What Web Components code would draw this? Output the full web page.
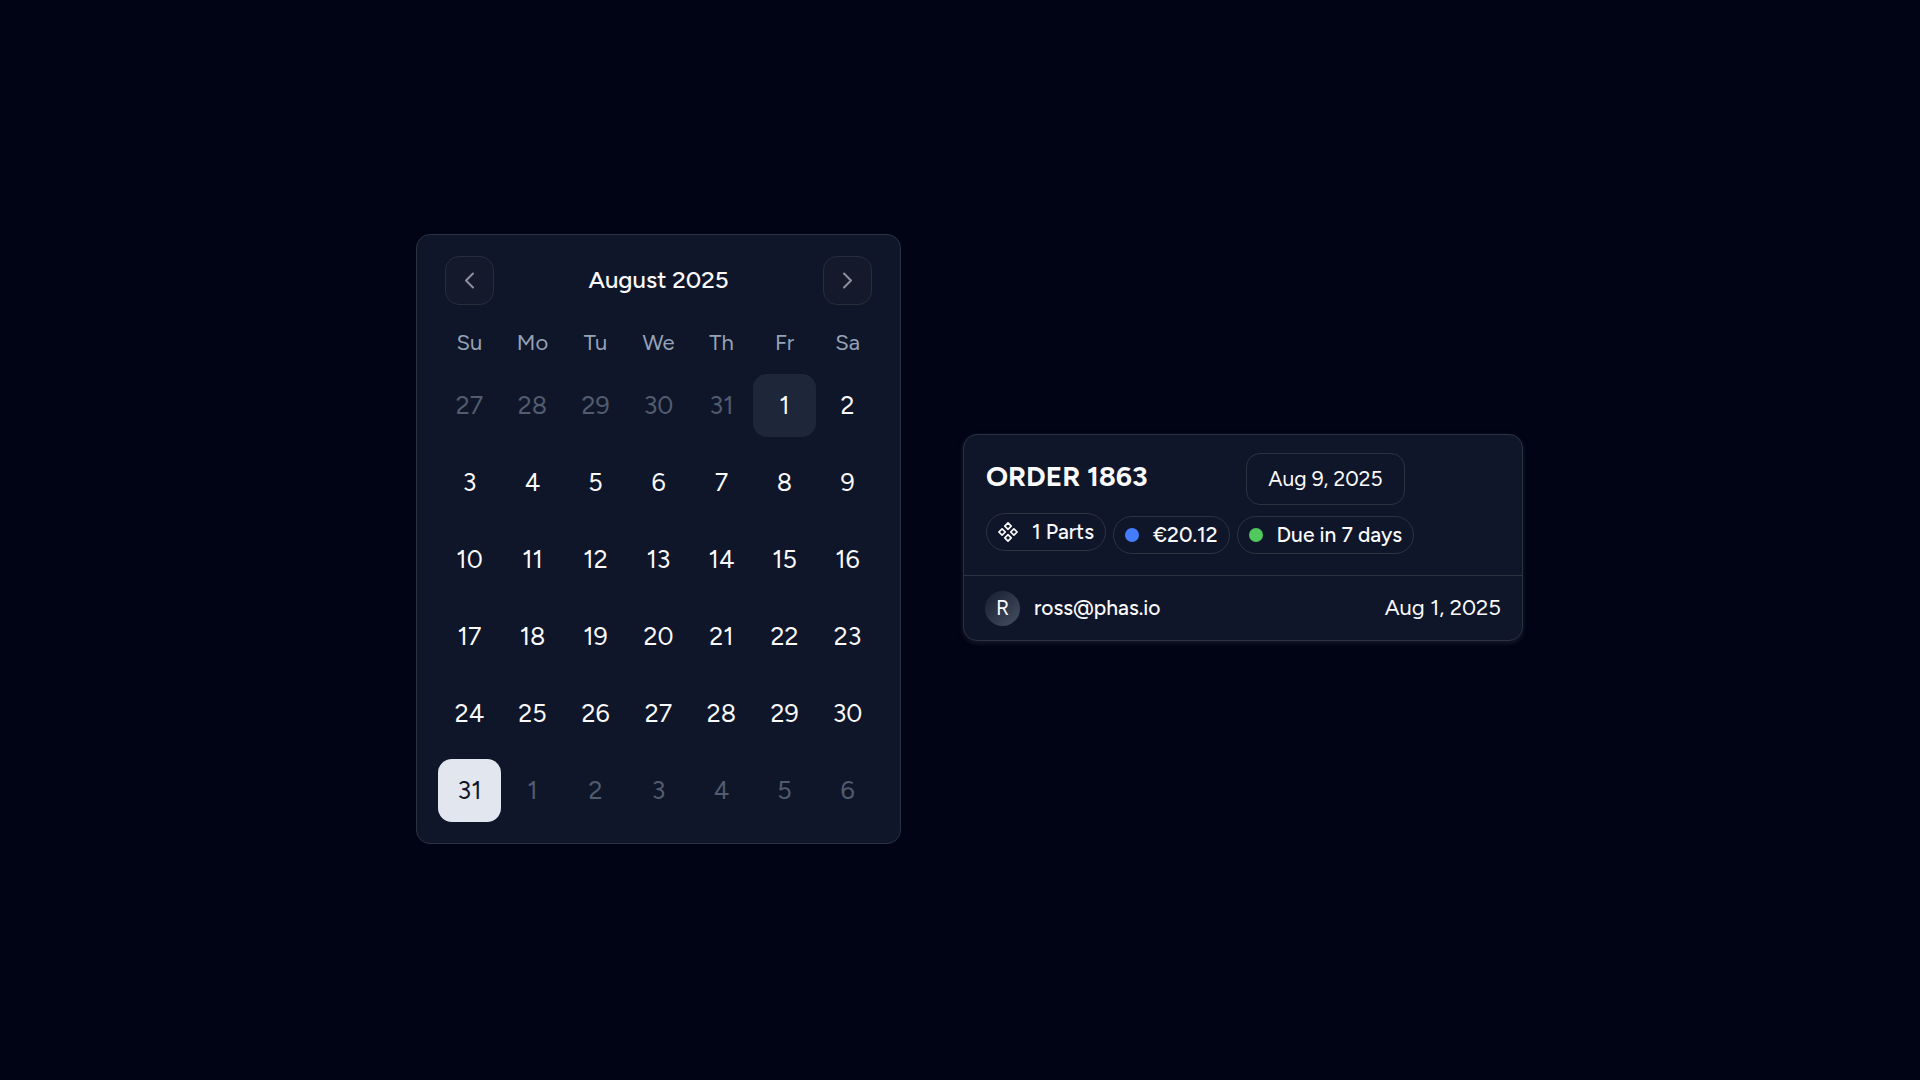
<!DOCTYPE html>
<html lang="en">
<head>
<meta charset="utf-8">
<title>Order planner</title>
<style>
  html { background: #010415; }
  body {
    margin: 0;
    min-height: 100vh;
    color: #fafafc;
    font-family: Figtree, Lato, "Liberation Sans", sans-serif;
    font-size: 22px;
    --card: #101629;
    --line: #2d3241;
    --muted: #94a3b8;
  }
</style>
</head>
<body>
<planner-page>
  <month-calendar month="August 2025"></month-calendar>
  <order-card>
    <span slot="title">ORDER 1863</span>
    <span slot="due">Aug 9, 2025</span>
    <info-chip slot="parts">
      <svg slot="icon" width="20" height="20" viewBox="0 0 20 20" fill="none" stroke="currentColor" stroke-width="1.7" stroke-linejoin="round" aria-hidden="true">
        <path d="M10 .9 13.200 4.100 10 7.300 6.800 4.100ZM4.100 6.800 7.300 10 4.100 13.200 .9 10ZM15.900 6.800 19.100 10 15.900 13.200 12.700 10ZM10 12.700 13.200 15.900 10 19.100 6.800 15.900Z"/>
      </svg>1 Parts</info-chip>
    <info-chip slot="price" dot="blue">€20.12</info-chip>
    <info-chip slot="status" dot="green">Due in 7 days</info-chip>
    <user-tag slot="owner" initial="R">ross@phas.io</user-tag>
    <time slot="created" datetime="2025-08-01">Aug 1, 2025</time>
  </order-card>
</planner-page>

<template id="page-tpl">
  <style>
    :host { display: flex; align-items: center; justify-content: center; gap: 62px; min-height: 100vh; box-sizing: border-box; padding: 0 0 3px 19px; }
    ::slotted(order-card) { flex: 0 1 560px; margin-bottom: 3px; }
  </style>
  <slot></slot>
</template>

<template id="calendar-tpl">
  <style>
    :host { display: block; box-sizing: border-box; padding: 21px; background: var(--card); border: 1px solid var(--line); border-radius: 14px; }
    header { display: flex; align-items: center; justify-content: space-between; padding: 0 7px; margin-bottom: 22px; }
    h2 { margin: 0; font-size: 24px; line-height: 32px; font-weight: 500; }
    table { border-collapse: collapse; }
    th { padding: 0; width: 63px; height: 33px; font-size: 22px; line-height: 32px; font-weight: 400; color: var(--muted); }
    td { padding: 14px 0 0; }
  </style>
  <header>
    <nav-button label="Previous month"></nav-button>
    <h2></h2>
    <nav-button label="Next month"></nav-button>
  </header>
  <table>
    <thead><tr></tr></thead>
    <tbody></tbody>
  </table>
</template>

<template id="nav-tpl">
  <style>
    :host { display: block; }
    button { display: grid; place-items: center; box-sizing: border-box; width: 49px; height: 49px; padding: 0; color: #8e919c; background: #14192b; border: 1px solid #282d3c; border-radius: 14px; }
    svg { display: block; }
  </style>
  <button type="button">
    <svg width="21" height="21" viewBox="0 0 21 21" fill="none" stroke="currentColor" stroke-width="2" stroke-linecap="round" stroke-linejoin="round" aria-hidden="true"><path/></svg>
  </button>
</template>

<template id="day-tpl">
  <style>
    :host { display: block; }
    button { display: block; width: 63px; height: 63px; padding: 0; border: 0; border-radius: 14px; background: none; color: inherit; font: inherit; font-size: 25px; line-height: 32px; text-align: center; }
    :host([state="outside"]) button { color: #525c70; }
    :host([state="today"]) button { background: #1e2739; }
    :host([state="selected"]) button { background: #e2e6ef; color: #101628; }
  </style>
  <button type="button"><slot></slot></button>
</template>

<template id="order-tpl">
  <style>
    :host { display: block; box-sizing: border-box; background: var(--card); border: 1px solid var(--line); border-radius: 14px; box-shadow: 0 2px 5px #2d324180; }
    .body { display: grid; grid-template-columns: auto auto auto; justify-content: start; column-gap: 7px; row-gap: 8px; padding: 18px 22px 21px; }
    h3 { grid-column: span 2; margin: 0; padding-top: 5px; font-size: 28px; line-height: 36px; font-weight: 700; }
    .date { justify-self: center; box-sizing: border-box; height: 52px; padding: 0 21px; border: 1px solid var(--line); border-radius: 14px; background: none; color: inherit; font: inherit; font-size: 21px; line-height: 28px; }
    .lower { align-self: end; padding-top: 3px; }
    footer { display: flex; align-items: center; justify-content: space-between; padding: 15px 21px 14px; border-top: 1px solid var(--line); line-height: 28px; }
  </style>
  <div class="body">
    <h3><slot name="title"></slot></h3>
    <button class="date" type="button"><slot name="due"></slot></button>
    <div><slot name="parts"></slot></div>
    <div class="lower"><slot name="price"></slot></div>
    <div class="lower"><slot name="status"></slot></div>
  </div>
  <footer><slot name="owner"></slot><slot name="created"></slot></footer>
</template>

<template id="chip-tpl">
  <style>
    :host { display: flex; align-items: center; gap: 14px; box-sizing: border-box; height: 38px; padding: 0 11px; border: 1px solid var(--line); border-radius: 19px; font-size: 21px; line-height: 28px; font-weight: 500; white-space: nowrap; }
    i { display: none; width: 14px; height: 14px; border-radius: 50%; }
    :host([dot]) i { display: block; }
    :host([dot="blue"]) i { background: #437dfb; }
    :host([dot="green"]) i { background: #50c85c; }
  </style>
  <i></i><slot name="icon"></slot><span><slot></slot></span>
</template>

<template id="user-tpl">
  <style>
    :host { display: flex; align-items: center; gap: 14px; font-size: 21px; font-weight: 500; }
    b { display: grid; place-items: center; width: 35px; height: 35px; border-radius: 50%; background: linear-gradient(135deg, #161e2f, #455062); font-size: 21px; font-weight: 400; }
  </style>
  <b></b><span><slot></slot></span>
</template>

<script>
  const stamp = (host, id) => {
    const root = host.attachShadow({ mode: "open" });
    root.append(document.getElementById(id).content.cloneNode(true));
    return root;
  };

  customElements.define("planner-page", class extends HTMLElement {
    connectedCallback() { if (!this.shadowRoot) stamp(this, "page-tpl"); }
  });

  customElements.define("nav-button", class extends HTMLElement {
    connectedCallback() {
      if (this.shadowRoot) return;
      const root = stamp(this, "nav-tpl");
      const next = this.getAttribute("label").startsWith("Next");
      root.querySelector("path").setAttribute("d", next ? "M7 3.500 14 10.500 7 17.500" : "M14 3.500 7 10.500 14 17.500");
      root.querySelector("button").setAttribute("aria-label", this.getAttribute("label"));
    }
  });

  customElements.define("calendar-day", class extends HTMLElement {
    connectedCallback() { if (!this.shadowRoot) stamp(this, "day-tpl"); }
  });

  customElements.define("month-calendar", class extends HTMLElement {
    connectedCallback() {
      if (this.shadowRoot) return;
      const root = stamp(this, "calendar-tpl");
      root.querySelector("h2").textContent = this.getAttribute("month");
      for (const name of ["Su", "Mo", "Tu", "We", "Th", "Fr", "Sa"]) {
        const th = document.createElement("th");
        th.scope = "col";
        th.textContent = name;
        root.querySelector("thead tr").append(th);
      }
      const first = new Date(2025, 6, 27);
      for (let week = 0; week < 6; week++) {
        const row = root.querySelector("tbody").insertRow();
        for (let i = 0; i < 7; i++) {
          const date = new Date(first.getFullYear(), first.getMonth(), first.getDate() + week * 7 + i);
          const day = document.createElement("calendar-day");
          day.textContent = date.getDate();
          if (date.getMonth() !== 7) day.setAttribute("state", "outside");
          else if (date.getDate() === 1) day.setAttribute("state", "today");
          else if (date.getDate() === 31) day.setAttribute("state", "selected");
          row.insertCell().append(day);
        }
      }
    }
  });

  customElements.define("order-card", class extends HTMLElement {
    connectedCallback() { if (!this.shadowRoot) stamp(this, "order-tpl"); }
  });

  customElements.define("info-chip", class extends HTMLElement {
    connectedCallback() { if (!this.shadowRoot) stamp(this, "chip-tpl"); }
  });

  customElements.define("user-tag", class extends HTMLElement {
    connectedCallback() {
      if (this.shadowRoot) return;
      stamp(this, "user-tpl").querySelector("b").textContent = this.getAttribute("initial");
    }
  });
</script>
</body>
</html>
